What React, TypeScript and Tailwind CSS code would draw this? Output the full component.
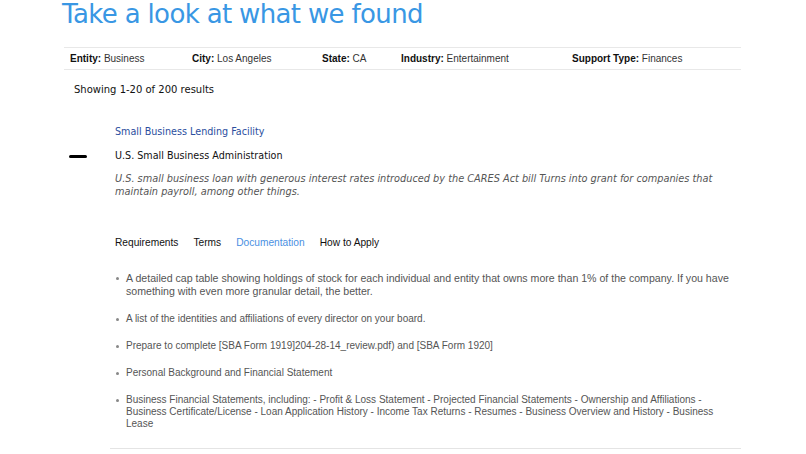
import React from "react";

const filters = [
  { label: "Entity:", value: "Business", w: "w-[122px]" },
  { label: "City:", value: "Los Angeles", w: "w-[130px]" },
  { label: "State:", value: "CA", w: "w-[79px]" },
  { label: "Industry:", value: "Entertainment", w: "w-[171px]" },
  { label: "Support Type:", value: "Finances", w: "" },
];

const tabs = ["Requirements", "Terms", "Documentation", "How to Apply"];

const docs = [
  "A detailed cap table showing holdings of stock for each individual and entity that owns more than 1% of the company. If you have something with even more granular detail, the better.",
  "A list of the identities and affiliations of every director on your board.",
  "Prepare to complete [SBA Form 1919]204-28-14_review.pdf) and [SBA Form 1920]",
  "Personal Background and Financial Statement",
  "Business Financial Statements, including: - Profit & Loss Statement - Projected Financial Statements - Ownership and Affiliations - Business Certificate/License - Loan Application History - Income Tax Returns - Resumes - Business Overview and History - Business Lease",
];

const lucida = "font-['DejaVu_Sans',sans-serif]";
const helv = "font-['Liberation_Sans',Arial,sans-serif]";

export default function App() {
  return (
    <div className="w-[806px] h-[454px] overflow-hidden bg-white">
      <h1
        className={`${lucida} ml-[62px] text-[26px] leading-[28px] tracking-[-0.65px] text-[#3997e4]`}
      >
        Take a look at what we found
      </h1>

      <div className="ml-[64px] w-[677px]">
        {/* active search filters */}
        <div
          className={`${helv} mt-[19px] flex h-[23px] items-center border-y border-[#e8e8e8] pl-[6px] text-[10px] text-[#333]`}
        >
          {filters.map((f) => (
            <div key={f.label} className={f.w}>
              <span className="font-bold text-[#111]">{f.label}</span> {f.value}
            </div>
          ))}
        </div>

        <p className={`${lucida} mt-[13px] pl-[10px] text-[10px] leading-[14px] text-[#111]`}>
          Showing 1-20 of 200 results
        </p>

        {/* result card */}
        <div className={`${lucida} mt-[28px] text-[9.6px]`}>
          <div className="pl-[51px] leading-[14px] text-[#2b4e9e]">
            Small Business Lending Facility
          </div>
          <div className="mt-[10px] flex items-center leading-[14px]">
            <div className="w-[51px] pl-[5px]">
              <div className="h-[3px] w-[18px] rounded-full bg-black" />
            </div>
            <span className="text-[#111]">U.S. Small Business Administration</span>
          </div>
          <p className="mt-[9px] pl-[51px] text-[9.75px] italic leading-[13px] text-[#555]">
            U.S. small business loan with generous interest rates introduced by the CARES Act
            bill Turns into grant for companies that maintain payroll, among other things.
          </p>

          <div
            className={`${helv} mt-[38px] flex gap-[15px] pl-[51px] text-[10.2px] leading-[14px] text-[#111]`}
          >
            {tabs.map((t) => (
              <span key={t} className={t === "Documentation" ? "text-[#4a90e2]" : ""}>
                {t}
              </span>
            ))}
          </div>

          <ul
            className={`${helv} mt-[22px] flex flex-col gap-[15px] pl-[51px] pr-[6px] text-[10px] leading-[12px] text-[#555]`}
          >
            {docs.map((d, i) => (
              <li
                key={d}
                className={i === 0 ? "flex text-[10.6px] leading-[13px]" : "flex"}
              >
                <span className="flex h-[12px] w-[11px] shrink-0 items-center pl-[1px]">
                  <span className="h-[3px] w-[3px] rounded-full bg-[#888]" />
                </span>
                <span>{d}</span>
              </li>
            ))}
          </ul>
        </div>

        <div className="ml-[46px] mt-[18px] border-t border-[#e4e4e4]" />
      </div>
    </div>
  );
}
